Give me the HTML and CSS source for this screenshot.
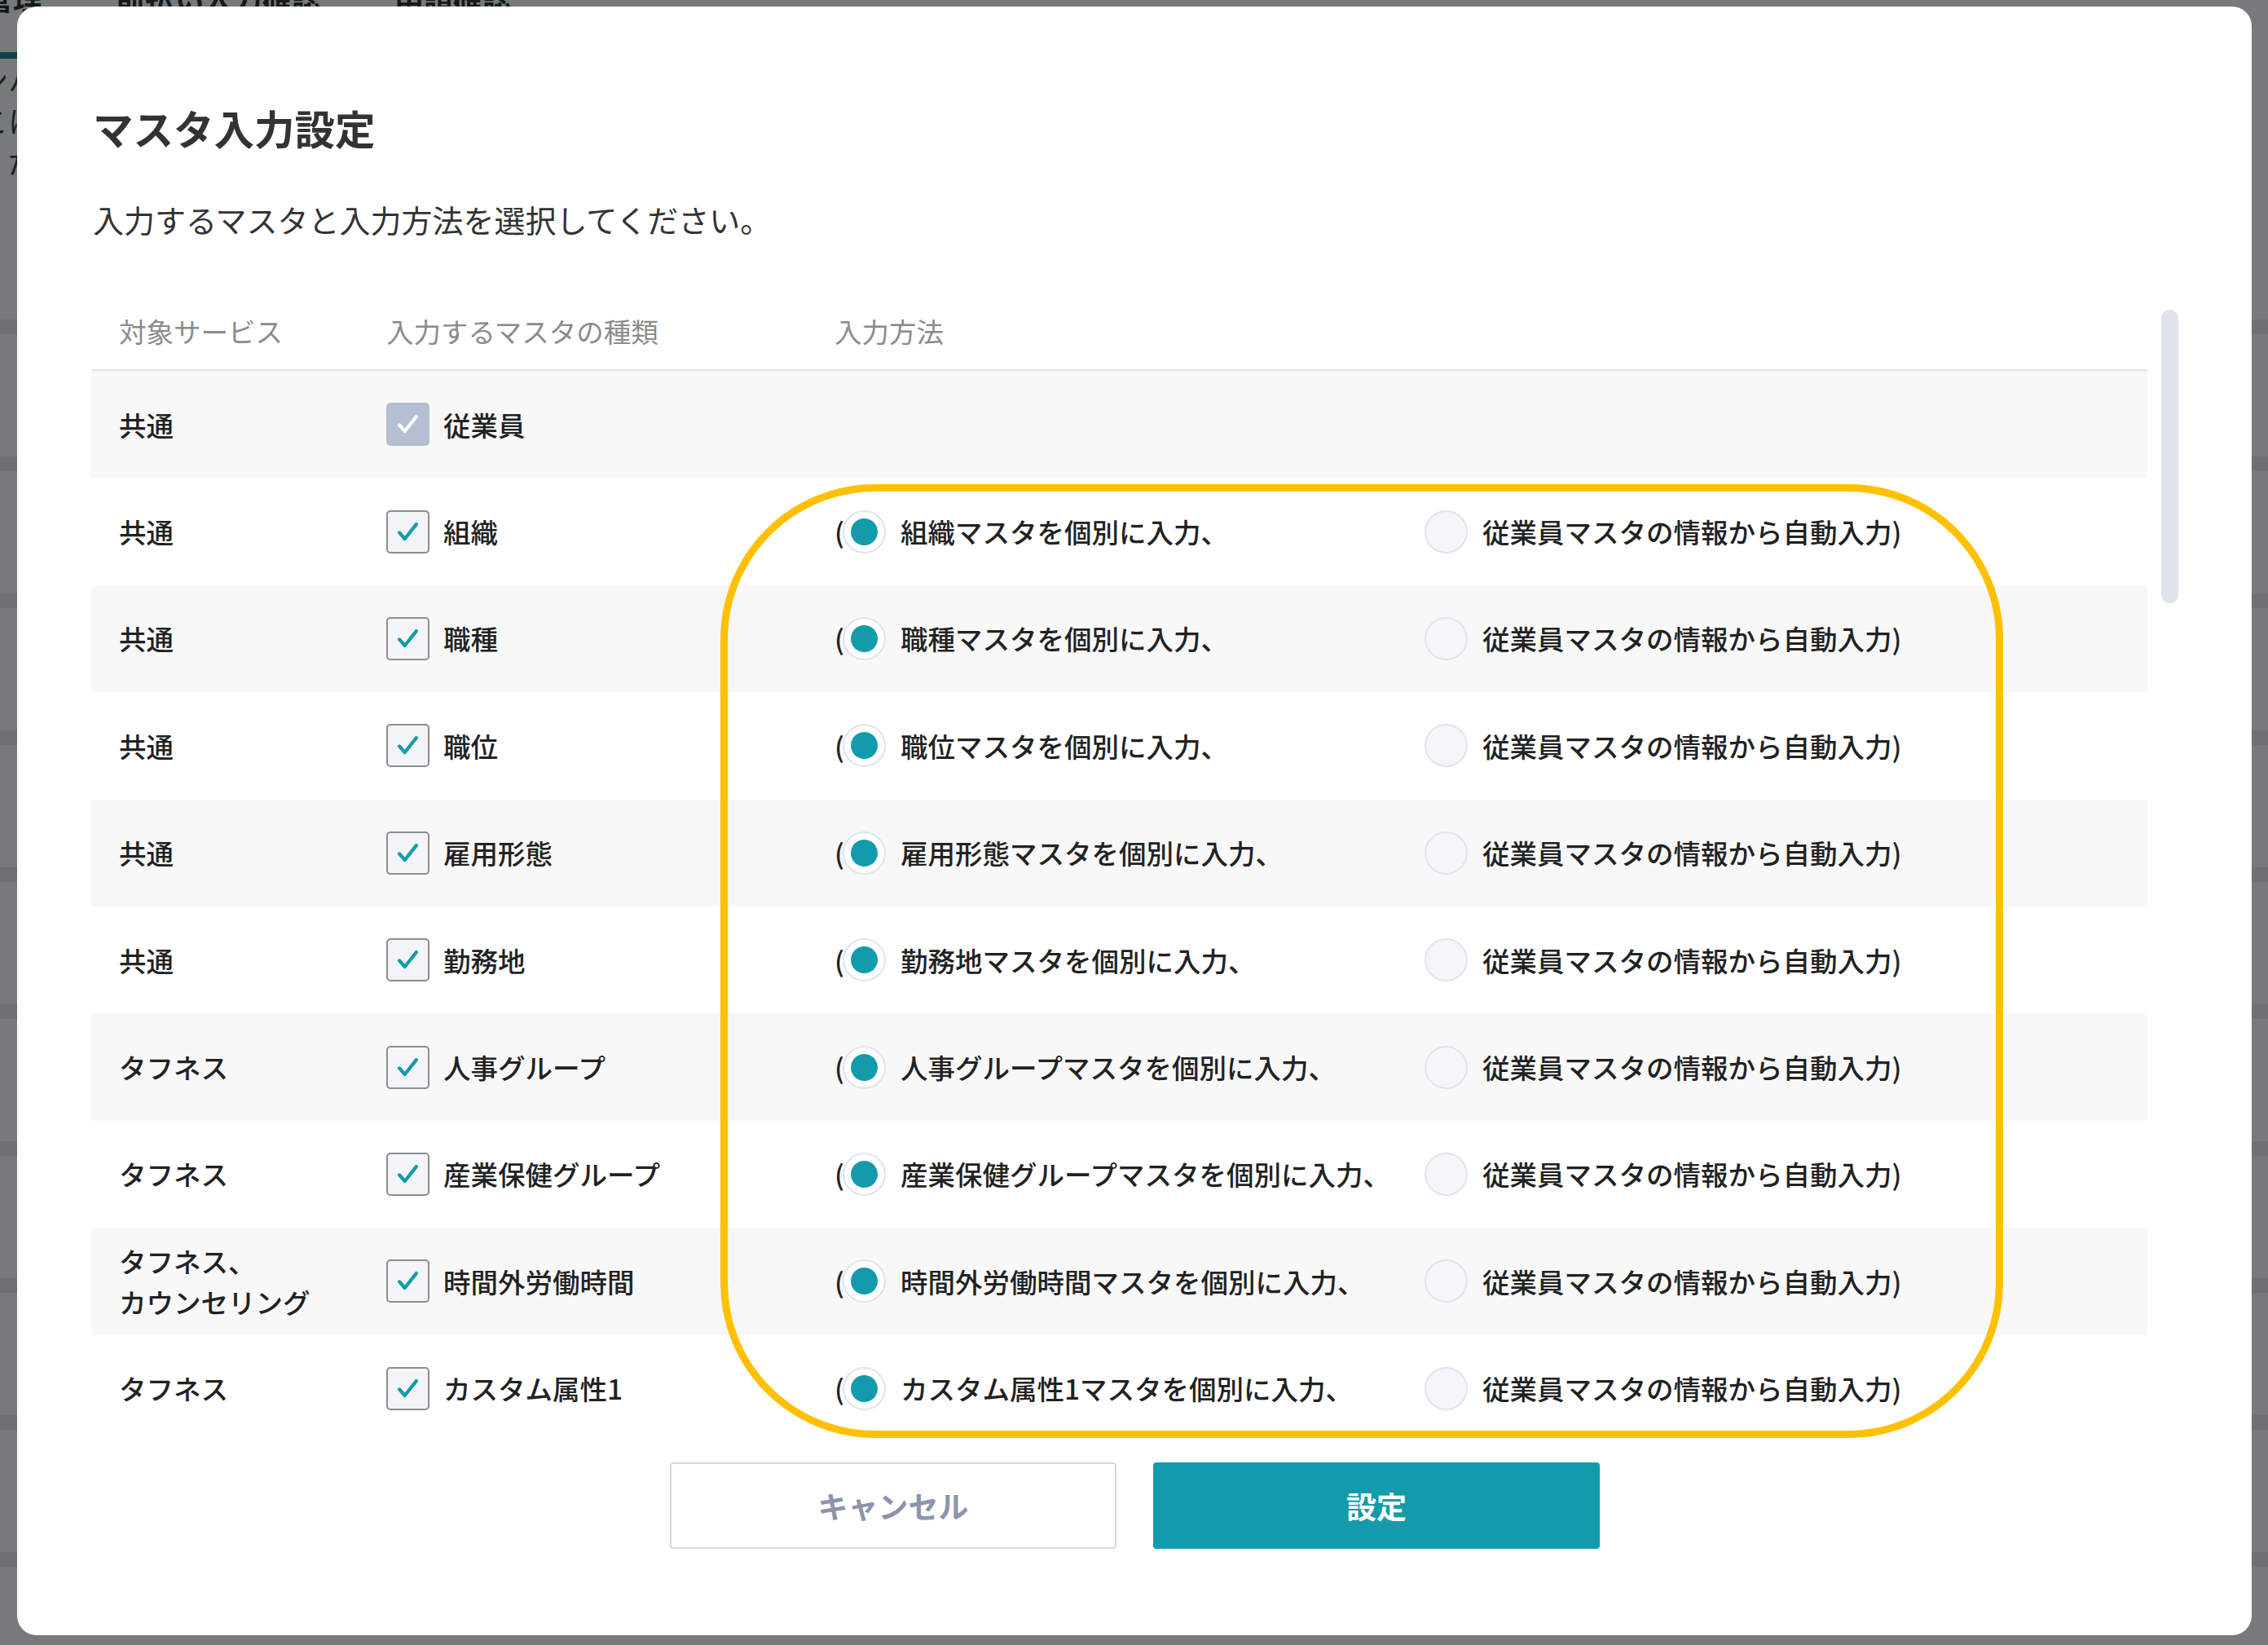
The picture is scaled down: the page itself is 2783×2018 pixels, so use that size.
FILE: index.html
```html
<!DOCTYPE html>
<html lang="ja">
<head>
  <meta charset="UTF-8">
  <title>マスタ入力設定</title>
  <link rel="stylesheet" href="styles.css">
</head>
<body>
<div class="page">
  <div class="page-nav">
    <span>管理</span>
    <span>前払い入力確認</span>
    <span>申請確認</span>
  </div>
  <div class="page-tab"></div>
  <div class="page-text">
    <p>ンハ</p>
    <p>こに</p>
    <p>くだ</p>
  </div>
  <div class="page-lines"></div>
</div>
<div class="overlay"></div>

<div class="modal">
  <h2 class="modal-title">マスタ入力設定</h2>
  <p class="modal-lead">入力するマスタと入力方法を選択してください。</p>

  <div class="table-area">
    <div class="master-table">
      <div class="row head">
        <div>対象サービス</div>
        <div>入力するマスタの種類</div>
        <div>入力方法</div>
      </div>

      <div class="row">
        <div>共通</div>
        <div class="master"><span class="checkbox disabled"><svg viewBox="0 0 52 52"><path d="M15 27 L22 35 L37 16"/></svg></span>従業員</div>
        <div></div>
      </div>

      <div class="row">
        <div>共通</div>
        <div class="master"><span class="checkbox"><svg viewBox="0 0 52 52"><path d="M15 27 L22 35 L37 16"/></svg></span>組織</div>
        <div class="method"><span class="paren">(</span><label class="option first"><span class="radio checked"></span>組織マスタを個別に入力、</label><label class="option"><span class="radio"></span>従業員マスタの情報から自動入力)</label></div>
      </div>

      <div class="row">
        <div>共通</div>
        <div class="master"><span class="checkbox"><svg viewBox="0 0 52 52"><path d="M15 27 L22 35 L37 16"/></svg></span>職種</div>
        <div class="method"><span class="paren">(</span><label class="option first"><span class="radio checked"></span>職種マスタを個別に入力、</label><label class="option"><span class="radio"></span>従業員マスタの情報から自動入力)</label></div>
      </div>

      <div class="row">
        <div>共通</div>
        <div class="master"><span class="checkbox"><svg viewBox="0 0 52 52"><path d="M15 27 L22 35 L37 16"/></svg></span>職位</div>
        <div class="method"><span class="paren">(</span><label class="option first"><span class="radio checked"></span>職位マスタを個別に入力、</label><label class="option"><span class="radio"></span>従業員マスタの情報から自動入力)</label></div>
      </div>

      <div class="row">
        <div>共通</div>
        <div class="master"><span class="checkbox"><svg viewBox="0 0 52 52"><path d="M15 27 L22 35 L37 16"/></svg></span>雇用形態</div>
        <div class="method"><span class="paren">(</span><label class="option first"><span class="radio checked"></span>雇用形態マスタを個別に入力、</label><label class="option"><span class="radio"></span>従業員マスタの情報から自動入力)</label></div>
      </div>

      <div class="row">
        <div>共通</div>
        <div class="master"><span class="checkbox"><svg viewBox="0 0 52 52"><path d="M15 27 L22 35 L37 16"/></svg></span>勤務地</div>
        <div class="method"><span class="paren">(</span><label class="option first"><span class="radio checked"></span>勤務地マスタを個別に入力、</label><label class="option"><span class="radio"></span>従業員マスタの情報から自動入力)</label></div>
      </div>

      <div class="row">
        <div>タフネス</div>
        <div class="master"><span class="checkbox"><svg viewBox="0 0 52 52"><path d="M15 27 L22 35 L37 16"/></svg></span>人事グループ</div>
        <div class="method"><span class="paren">(</span><label class="option first"><span class="radio checked"></span>人事グループマスタを個別に入力、</label><label class="option"><span class="radio"></span>従業員マスタの情報から自動入力)</label></div>
      </div>

      <div class="row">
        <div>タフネス</div>
        <div class="master"><span class="checkbox"><svg viewBox="0 0 52 52"><path d="M15 27 L22 35 L37 16"/></svg></span>産業保健グループ</div>
        <div class="method"><span class="paren">(</span><label class="option first"><span class="radio checked"></span>産業保健グループマスタを個別に入力、</label><label class="option"><span class="radio"></span>従業員マスタの情報から自動入力)</label></div>
      </div>

      <div class="row">
        <div>タフネス、<br>カウンセリング</div>
        <div class="master"><span class="checkbox"><svg viewBox="0 0 52 52"><path d="M15 27 L22 35 L37 16"/></svg></span>時間外労働時間</div>
        <div class="method"><span class="paren">(</span><label class="option first"><span class="radio checked"></span>時間外労働時間マスタを個別に入力、</label><label class="option"><span class="radio"></span>従業員マスタの情報から自動入力)</label></div>
      </div>

      <div class="row">
        <div>タフネス</div>
        <div class="master"><span class="checkbox"><svg viewBox="0 0 52 52"><path d="M15 27 L22 35 L37 16"/></svg></span>カスタム属性1</div>
        <div class="method"><span class="paren">(</span><label class="option first"><span class="radio checked"></span>カスタム属性1マスタを個別に入力、</label><label class="option"><span class="radio"></span>従業員マスタの情報から自動入力)</label></div>
      </div>
    </div>

    <div class="scrollbar"><div class="scroll-thumb"></div></div>

    <!-- 入力方法の強調枠 -->
    <div class="highlight"></div>
  </div>

  <div class="actions">
    <button class="btn btn-cancel">キャンセル</button>
    <button class="btn btn-primary">設定</button>
  </div>
</div>
</body>
</html>
```

FILE: styles.css
```css
body {
  margin: 0;
  width: 2783px;
  height: 2018px;
  overflow: hidden;
  position: relative;
  font-family: "Noto Sans CJK JP", "Noto Sans", sans-serif;
  background-color: #ffffff;
}

/* 背景のページ */
.page {
  width: 100%;
  height: 100%;
}

.page-nav {
  display: flex;
  gap: 90px;
  margin-top: -26px;
  margin-left: -20px;
  font-size: 36px;
  font-weight: 700;
  line-height: 46px;
  color: #222;
}

.page-tab {
  width: 40px;
  height: 8px;
  margin-top: 44px;
  background-color: #0f8795;
}

.page-text {
  margin-left: -26px;
  font-size: 36px;
  line-height: 50px;
  color: #333;
}

.page-text p {
  margin: 0;
}

.page-lines {
  height: 1700px;
  margin-top: 20px;
  background: repeating-linear-gradient(to bottom, #ffffff 0, #ffffff 150px, #e8ebee 150px, #e8ebee 168px);
}

.overlay {
  position: absolute;
  inset: 0;
  background-color: rgba(12, 17, 20, 0.56);
}

/* モーダル */
.modal {
  position: absolute;
  left: 21px;
  top: 8px;
  width: 2742px;
  height: 1998px;
  box-sizing: border-box;
  padding: 115px 90px 0 91px;
  background-color: #ffffff;
  border-radius: 24px;
  color: #333;
}

.modal-title {
  margin: 0;
  padding-left: 2px;
  font-size: 49.5px;
  line-height: 68px;
  font-weight: 700;
  color: #333;
}

.modal-lead {
  margin: 52px 0 0;
  padding-left: 2px;
  font-size: 38px;
  line-height: 52px;
  color: #333;
}

.table-area {
  position: relative;
  display: flex;
  gap: 17px;
  margin-top: 65px;
}

.master-table {
  width: 2523px;
}

.row {
  display: grid;
  grid-template-columns: 328px 550px 1fr;
  align-items: center;
  height: 131.4px;
  padding-left: 34px;
  box-sizing: border-box;
  font-size: 33.5px;
  line-height: 50px;
  font-weight: 500;
  color: #222;
}

.row:nth-child(even) {
  background-color: #f8f8f8;
}

.row.head {
  height: 95px;
  padding-bottom: 2px;
  border-bottom: 2px solid #dfe4ec;
  font-weight: 400;
  color: #8b8b8b;
}

.master {
  display: flex;
  align-items: center;
  gap: 17px;
}

.checkbox {
  display: flex;
  width: 53px;
  height: 53px;
  box-sizing: border-box;
  border: 2.5px solid #8d8d8d;
  border-radius: 5px;
  background-color: #f3f5f9;
}

.checkbox svg {
  width: 100%;
  height: 100%;
  fill: none;
  stroke: #139bab;
  stroke-width: 4.5;
  stroke-linecap: round;
  stroke-linejoin: round;
}

.checkbox.disabled {
  border-color: #b4bfd2;
  background-color: #b4bfd2;
}

.checkbox.disabled svg {
  stroke: #ffffff;
}

.method {
  display: flex;
  align-items: center;
}

.paren {
  width: 10px;
}

.option {
  display: flex;
  align-items: center;
  gap: 18px;
}

.option.first {
  width: 714px;
}

.radio {
  display: flex;
  align-items: center;
  justify-content: center;
  width: 53px;
  height: 53px;
  box-sizing: border-box;
  border: 2.5px solid #e0e4ec;
  border-radius: 50%;
  background-color: #f4f6fa;
}

.radio.checked {
  background-color: #ffffff;
}

.radio.checked::after {
  content: "";
  width: 33px;
  height: 33px;
  border-radius: 50%;
  background-color: #139bab;
}

.scrollbar {
  width: 21px;
}

.scroll-thumb {
  height: 360px;
  margin-top: 20px;
  border-radius: 11px;
  background-color: #dfe3ec;
}

.highlight {
  position: absolute;
  left: 772px;
  top: 234px;
  width: 1574px;
  height: 1170px;
  box-sizing: border-box;
  border: 9px solid #ffc000;
  border-radius: 190px;
  pointer-events: none;
}

/* ボタン */
.actions {
  display: flex;
  justify-content: center;
  gap: 45px;
  margin-top: 25px;
}

.btn {
  width: 548px;
  height: 106px;
  border-radius: 4px;
  font-family: inherit;
  font-size: 37px;
  font-weight: 700;
  cursor: pointer;
}

.btn-cancel {
  border: 2px solid #d3d8e0;
  background-color: #ffffff;
  color: #8c94ab;
}

.btn-primary {
  border: none;
  background-color: #139bab;
  color: #ffffff;
}
```
